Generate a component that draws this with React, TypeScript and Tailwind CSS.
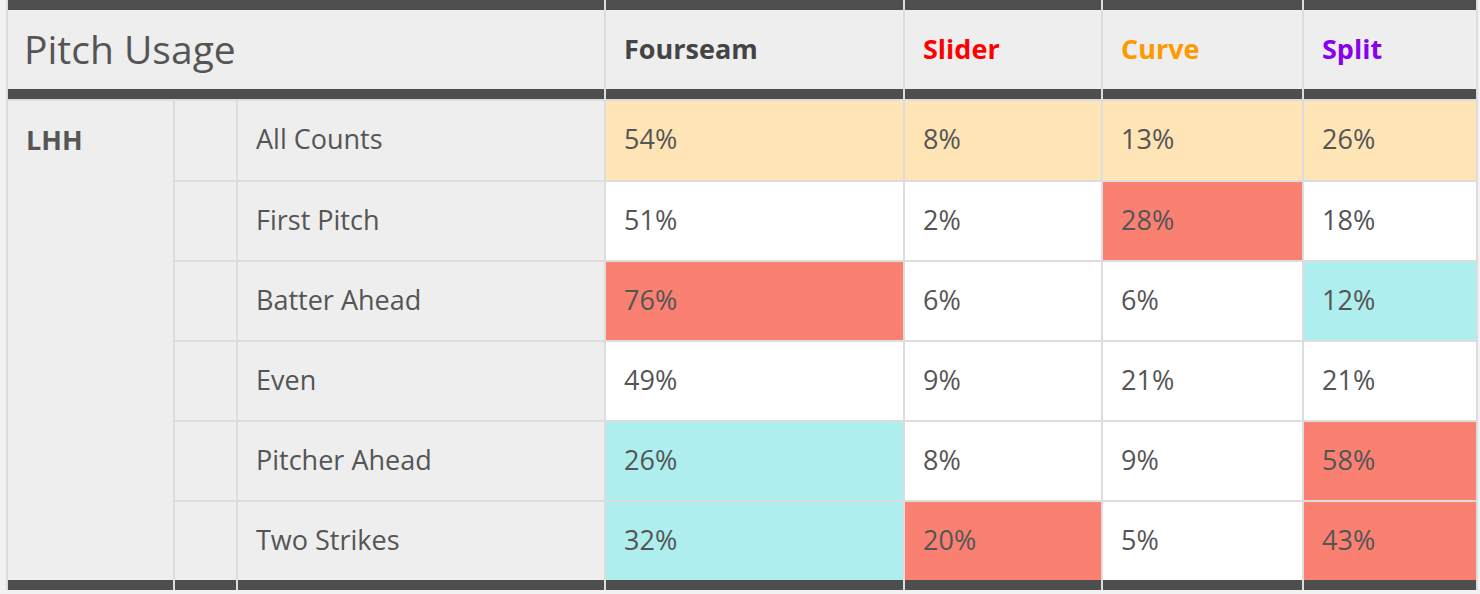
const PITCHES = [
  { name: "Fourseam", color: "text-[#444444]" },
  { name: "Slider", color: "text-[#ff0000]" },
  { name: "Curve", color: "text-[#ff9900]" },
  { name: "Split", color: "text-[#8800ee]" },
];

type Shade = "none" | "peach" | "hot" | "cold";

interface CountRow {
  label: string;
  values: [string, Shade][];
}

const ROWS: CountRow[] = [
  { label: "All Counts", values: [["54%", "peach"], ["8%", "peach"], ["13%", "peach"], ["26%", "peach"]] },
  { label: "First Pitch", values: [["51%", "none"], ["2%", "none"], ["28%", "hot"], ["18%", "none"]] },
  { label: "Batter Ahead", values: [["76%", "hot"], ["6%", "none"], ["6%", "none"], ["12%", "cold"]] },
  { label: "Even", values: [["49%", "none"], ["9%", "none"], ["21%", "none"], ["21%", "none"]] },
  { label: "Pitcher Ahead", values: [["26%", "cold"], ["8%", "none"], ["9%", "none"], ["58%", "hot"]] },
  { label: "Two Strikes", values: [["32%", "cold"], ["20%", "hot"], ["5%", "none"], ["43%", "hot"]] },
];

const SHADES: Record<Shade, string> = {
  none: "bg-white",
  peach: "bg-[#ffe4b5]",
  hot: "bg-[#fa8072]",
  cold: "bg-[#afeeee]",
};

const BAND = "border-[#4e4e4e]";

export default function App() {
  const last = ROWS.length - 1;
  return (
    <div
      className="w-[1480px] h-[594px] bg-[#f2f2f2] overflow-hidden"
      style={{ fontFamily: '"Open Sans", "Liberation Sans", sans-serif' }}
    >
      <div className="ml-[6px] w-[1472px] border-x-2 border-[#dddddd] bg-[#dddddd] grid grid-cols-[165px_61px_366px_297px_196px_199px_172px] grid-rows-[99px_79px_78px_78px_78px_78px_88px] gap-[2px]">
        <div className={`col-span-3 bg-[#eeeeee] border-y-[10px] ${BAND} flex items-center pl-[16px] pb-[1px] text-[39px] text-[#555555]`}>
          Pitch Usage
        </div>
        {PITCHES.map((p) => (
          <div
            key={p.name}
            className={`bg-[#eeeeee] border-y-[10px] ${BAND} flex items-center pl-[18px] pb-[1px] text-[27px] font-bold ${p.color}`}
          >
            {p.name}
          </div>
        ))}

        <div className={`row-span-6 bg-[#eeeeee] border-b-[10px] ${BAND} pl-[18px] pt-[19px] text-[27px] font-bold text-[#555555]`}>
          LHH
        </div>

        {ROWS.map((row, i) => (
          <div key={row.label} className="contents">
            <div className={`bg-[#eeeeee] ${i === last ? `border-b-[10px] ${BAND}` : ""}`} />
            <div
              className={`bg-[#eeeeee] flex items-center pl-[18px] pb-[2px] text-[27px] text-[#555555] ${i === last ? `border-b-[10px] ${BAND}` : ""}`}
            >
              {row.label}
            </div>
            {row.values.map(([v, shade], j) => (
              <div
                key={j}
                className={`${SHADES[shade]} flex items-center pl-[18px] pb-[2px] text-[27px] text-[#555555] ${i === last ? `border-b-[10px] ${BAND}` : ""}`}
              >
                {v}
              </div>
            ))}
          </div>
        ))}
      </div>
    </div>
  );
}
